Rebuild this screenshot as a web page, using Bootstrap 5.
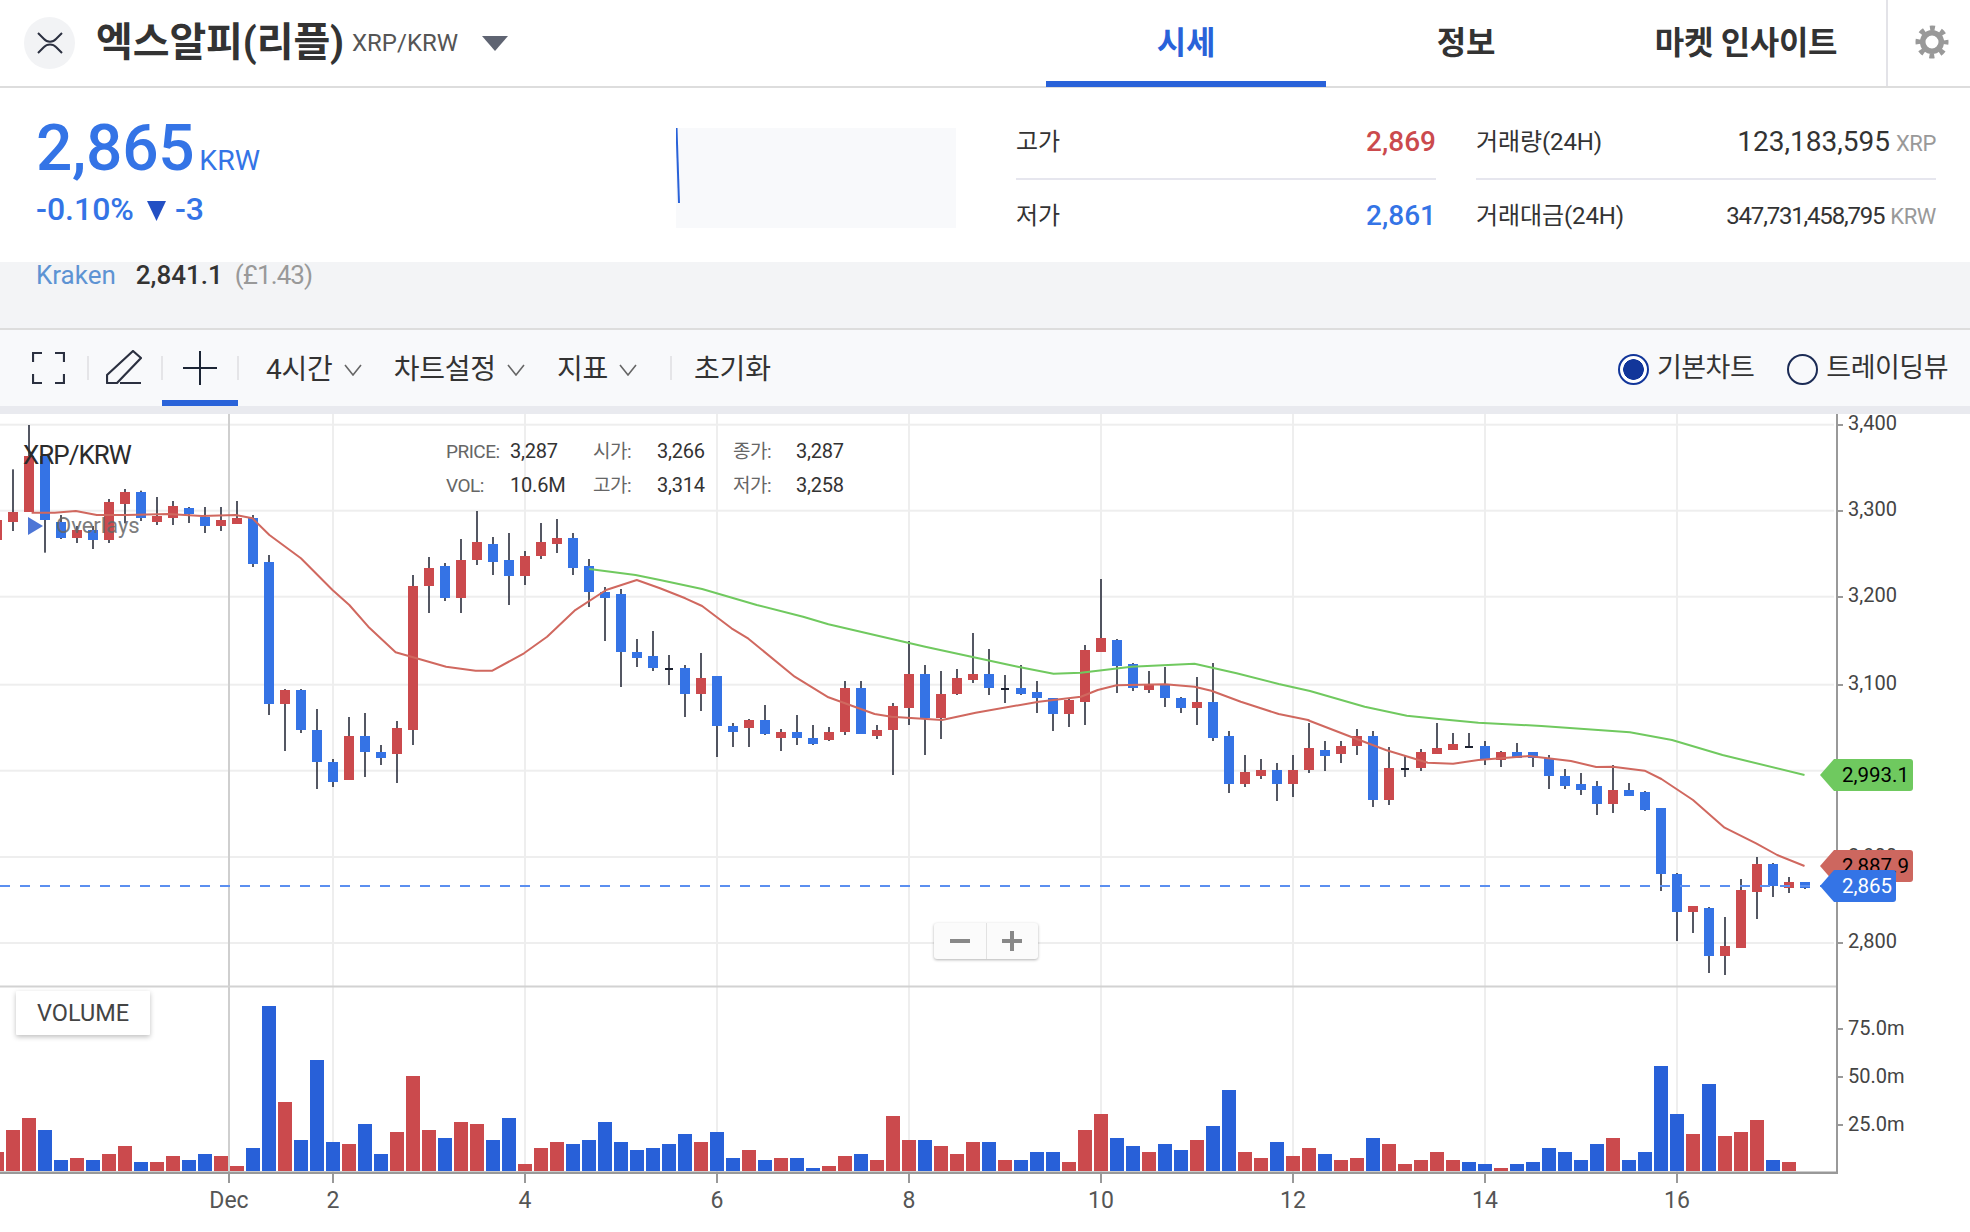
<!DOCTYPE html>
<html lang="ko">
<head>
<meta charset="UTF-8">
<meta name="viewport" content="width=device-width, initial-scale=1.0">
<title>XRP/KRW</title>
<link href="https://cdn.jsdelivr.net/npm/bootstrap@5.3.0/dist/css/bootstrap.min.css" rel="stylesheet">
<style>
    html, body { margin: 0; width: 1970px; height: 1232px; overflow: hidden; }
    body { font-family: Roboto, "Noto Sans CJK KR", sans-serif; color: #333; background: #fff; }

    /* top bar */
    .top-bar { height: 88px; border-bottom: 2px solid #ddd; }
    .close-btn { width: 51px; height: 52px; margin: 0 21px 0 24px; padding: 0; border: 0; border-radius: 50%; background: #f2f3f5; }
    .coin-name { font-size: 40px; font-weight: 700; letter-spacing: -.1px; color: #333; }
    .coin-pair { font-size: 24px; color: #555; margin-left: 8px; }
    .coin-caret { margin-left: 24px; }
    .tabs { margin-left: auto; margin-right: 0; height: 88px; }
    .tabs .nav-link { width: 280px; height: 88px; padding: 20px 0 0; text-align: center; font-size: 32px; font-weight: 700; color: #333; letter-spacing: -.3px; border-bottom: 6px solid transparent; }
    .tabs .nav-link.active { color: #2962d9; border-bottom-color: #2962d9; }
    .gear-cell { width: 84px; height: 86px; padding: 0 0 2px 27px; border-left: 2px solid #e3e3e8; }

    /* price panel */
    .price-panel { height: 174px; }
    .price-left { width: 676px; padding: 23px 0 0 36px; color: #3474e6; }
    .price-now { font-size: 64px; font-weight: 500; line-height: 76px; letter-spacing: -.3px; }
    .price-unit { font-size: 28.500px; margin-left: 5px; letter-spacing: 0; }
    .price-change { font-size: 32px; font-weight: 500; line-height: 40px; margin-top: -10px; }
    .price-arrow { margin: 0 9px 0 13px; vertical-align: -1px; }
    .spark { width: 280px; height: 100px; margin-top: 40px; background: #f8f9fb; }
    .stat-col { margin-left: 60px; width: 420px; }
    .stat-col + .stat-col { margin-left: 40px; width: 460px; }
    .stat-row { height: 92px; padding-top: 17px; border-bottom: 2px solid #e6e6ee; }
    .stat-row + .stat-row { height: 71px; padding-top: 1px; border-bottom: 0; }
    .stat-label { font-size: 24px; letter-spacing: -.1px; color: #333; }
    .stat-value { font-size: 28px; font-weight: 500; }
    .stat-num { font-size: 28px; }
    .stat-num-sm { font-size: 24px; letter-spacing: -1.2px; }
    .stat-unit { font-size: 22px; color: #999; margin-left: 6px; letter-spacing: -.4px; }
    .text-up { color: #cb4a4d; }
    .text-down { color: #3474e6; }

    /* exchange band */
    .band { height: 68px; background: #f3f4f6; border-bottom: 2px solid #ddd; padding-left: 36px; font-size: 26px; line-height: 26px; }
    .band-name { color: #5d93d3; margin-right: 20px; }
    .band-price { font-weight: 500; color: #333; margin-right: 12px; }
    .band-fiat { color: #999; letter-spacing: -.9px; }

    /* chart toolbar */
    .toolbar { height: 84px; background: #f8f9fb; border-bottom: 8px solid #e9eaef; color: #333; }
    .full-icon { margin: 0 22px 0 32px; }
    .pencil-cell { width: 72px; padding-left: 17px; }
    .tool { width: 76px; height: 76px; margin: 0 -1px; }
    .tool.active { border-bottom: 6px solid #2962d9; padding-top: 6px; }
    .sep { width: 2px; height: 24px; background: #e5e5e8; flex: none; }
    .sep-reset { margin: 0 22px 0 33px; }
    .tool-menu { font-size: 28px; padding: 3px 0 0; border: 0; color: #333; letter-spacing: -.2px; margin-left: 32px; }
    .tool-menu.first { margin-left: 27px; }
    .tool-menu.plain { margin-left: 0; }
    .tool-menu svg { margin-left: 11px; vertical-align: 3px; }
    .view-switch { margin-left: auto; padding-right: 22px; }
    .view-switch .form-check-input { width: 31px; height: 31px; margin: 2px 8px 0 0; float: none; background-color: transparent; border: 2px solid #1b2b55; }
    .view-switch .form-check-input:checked { border-color: #12369a; background-color: #fff; background-image: radial-gradient(circle, #12369a 0 10px, transparent 10.6px); }
    .view-switch .form-check-label { font-size: 27px; letter-spacing: -.5px; color: #333; }
    .view-switch .form-check { padding: 0; margin: 0 0 0 33px; min-height: 0; }

    /* chart */
    .chart-wrap { position: relative; width: 1970px; height: 818px; }
    .chart-wrap svg { display: block; }
    .chart-title { position: absolute; left: 23px; top: 24px; font-size: 26px; line-height: 34px; letter-spacing: -1px; color: #2b2b2b; }
    .overlays { position: absolute; left: 28px; top: 100px; font-size: 22px; line-height: 24px; color: #666; opacity: .85; }
    .overlays span { margin-left: 13px; }
    .legend-box { position: absolute; left: 446px; top: 24px; display: grid; grid-template-columns: 64px 83px 64px 76px 63px 60px; row-gap: 7px; font-size: 20px; line-height: 27px; color: #333; letter-spacing: -.2px; }
    .legend-box .lbl { color: #666; font-size: 19px; letter-spacing: -.5px; }
    .volume-tag { position: absolute; left: 16px; top: 577px; width: 134px; height: 44px; border: 0; padding: 1px 0 0; border-radius: 1px; background: #fff; box-shadow: 0 2px 5px rgba(0,0,0,.25); font-size: 23.5px; color: #444; }
    .zoom-box { position: absolute; left: 934px; top: 509px; width: 104px; height: 36px; background: #fbfbfb; border-radius: 3px; box-shadow: 0 1px 3px rgba(0,0,0,.3); }
    .zoom-box .btn { flex: 1; padding: 0; border: 0; border-radius: 0; line-height: 0; }
    .zoom-box .btn + .btn { border-left: 1px solid #e2e2e2; }
</style>
</head>
<body>

<div class="top-bar d-flex align-items-center">
    <button class="close-btn d-flex align-items-center justify-content-center" type="button">
        <svg width="26" height="22" viewBox="0 0 26 22"><path d="M1 1L7 7C10 10.500 16 10.500 19 7L25 1M1 21L7 15C10 11.500 16 11.500 19 15L25 21" fill="none" stroke="#2b3040" stroke-width="2"/></svg>
    </button>
    <span class="coin-name">엑스알피(리플)</span>
    <span class="coin-pair">XRP/KRW</span>
    <svg class="coin-caret" width="26" height="15" viewBox="0 0 26 15"><path d="M0 0H26L13 15Z" fill="#5f6472"/></svg>
    <ul class="nav tabs">
        <li class="nav-item"><a class="nav-link active" href="#">시세</a></li>
        <li class="nav-item"><a class="nav-link" href="#">정보</a></li>
        <li class="nav-item"><a class="nav-link" href="#">마켓 인사이트</a></li>
    </ul>
    <div class="gear-cell d-flex align-items-center">
        <svg width="34" height="34" viewBox="0 0 34 34">
            <circle cx="17" cy="17" r="14" fill="none" stroke="#999" stroke-width="5" stroke-dasharray="5 5.996" stroke-dashoffset="2.5"/>
            <circle cx="17" cy="17" r="9.300" fill="none" stroke="#999" stroke-width="5.600"/>
        </svg>
    </div>
</div>

<div class="price-panel d-flex">
    <div class="price-left">
        <div class="price-now">2,865<span class="price-unit fw-normal">KRW</span></div>
        <div class="price-change">-0.10%<svg class="price-arrow" width="19" height="20" viewBox="0 0 19 20"><path d="M0 0H19L9.500 20Z" fill="#2350c4"/></svg>-3</div>
    </div>
    <div class="spark">
        <svg width="280" height="100" class="d-block"><path d="M0.5 0L3 75" stroke="#2962d9" stroke-width="2" fill="none"/></svg>
    </div>
    <div class="stat-col">
        <div class="stat-row d-flex justify-content-between align-items-center"><span class="stat-label">고가</span><span class="stat-value text-up">2,869</span></div>
        <div class="stat-row d-flex justify-content-between align-items-center"><span class="stat-label">저가</span><span class="stat-value text-down">2,861</span></div>
    </div>
    <div class="stat-col">
        <div class="stat-row d-flex justify-content-between align-items-center"><span class="stat-label">거래량(24H)</span><span><span class="stat-num">123,183,595</span><span class="stat-unit">XRP</span></span></div>
        <div class="stat-row d-flex justify-content-between align-items-center"><span class="stat-label">거래대금(24H)</span><span><span class="stat-num-sm">347,731,458,795</span><span class="stat-unit">KRW</span></span></div>
    </div>
</div>

<div class="band">
    <span class="band-name">Kraken</span><span class="band-price">2,841.1</span><span class="band-fiat">(£1.43)</span>
</div>

<div class="toolbar d-flex align-items-center">
    <svg class="full-icon" width="33" height="32" viewBox="0 0 33 32"><path d="M1 10V1H10M23 1H32V10M1 22V31H10M23 31H32V22" fill="none" stroke="#2b3040" stroke-width="2.200"/></svg>
    <div class="sep"></div>
    <div class="pencil-cell">
        <svg class="d-block" width="36" height="36" viewBox="0 0 36 36"><path d="M1 25L27 1L35 8L11 33H1ZM14 33H35" fill="none" stroke="#2b3040" stroke-width="2.200" stroke-linejoin="round"/></svg>
    </div>
    <div class="sep"></div>
    <div class="tool active d-flex align-items-center justify-content-center">
        <svg width="36" height="36" viewBox="0 0 36 36"><path d="M18 1V35M1 18H35" stroke="#1c2535" stroke-width="2"/></svg>
    </div>
    <div class="sep"></div>
    <button class="btn tool-menu first" type="button">4시간<svg width="18" height="12" viewBox="0 0 18 12"><path d="M1 1L9 11L17 1" fill="none" stroke="#666" stroke-width="1.600"/></svg></button>
    <button class="btn tool-menu" type="button">차트설정<svg width="18" height="12" viewBox="0 0 18 12"><path d="M1 1L9 11L17 1" fill="none" stroke="#666" stroke-width="1.600"/></svg></button>
    <button class="btn tool-menu" type="button">지표<svg width="18" height="12" viewBox="0 0 18 12"><path d="M1 1L9 11L17 1" fill="none" stroke="#666" stroke-width="1.600"/></svg></button>
    <div class="sep sep-reset"></div>
    <button class="btn tool-menu plain" type="button">초기화</button>
    <div class="view-switch d-flex align-items-center">
        <div class="form-check d-flex align-items-center">
            <input class="form-check-input" type="radio" name="chartView" id="viewBasic" checked>
            <label class="form-check-label" for="viewBasic">기본차트</label>
        </div>
        <div class="form-check d-flex align-items-center">
            <input class="form-check-input" type="radio" name="chartView" id="viewTrading">
            <label class="form-check-label" for="viewTrading">트레이딩뷰</label>
        </div>
    </div>
</div>

<div class="chart-wrap">
    <svg id="chart" width="1970" height="818" viewBox="0 414 1970 818" font-family="Roboto, sans-serif"></svg>
    <div class="chart-title">XRP/KRW</div>
    <div class="overlays d-flex align-items-center">
        <svg width="15" height="18" viewBox="0 0 15 18"><path d="M0 0L15 9L0 18Z" fill="#2f5fd0"/></svg><span>Overlays</span>
    </div>
    <div class="legend-box">
        <span class="lbl">PRICE:</span><span>3,287</span><span class="lbl">시가:</span><span>3,266</span><span class="lbl">종가:</span><span>3,287</span>
        <span class="lbl">VOL:</span><span>10.6M</span><span class="lbl">고가:</span><span>3,314</span><span class="lbl">저가:</span><span>3,258</span>
    </div>
    <button class="volume-tag" type="button">VOLUME</button>
    <div class="zoom-box d-flex">
        <button class="btn d-flex align-items-center justify-content-center" type="button"><svg width="20" height="4"><rect width="20" height="4" fill="#888"/></svg></button>
        <button class="btn d-flex align-items-center justify-content-center" type="button"><svg width="20" height="20"><path d="M8 0H12V8H20V12H12V20H8V12H0V8H8Z" fill="#888"/></svg></button>
    </div>
</div>

<script>
    const CANDLE_BLUE = '#3573e5', BAR_BLUE = '#2860d8', RED = '#cb4a4d', WICK = '#1c2130';

    // rows are read off 3x crops: [type, bodyTop, bodyBottom, wickTop, wickBottom], y = y0 + v / 3
    const candleChunks = [
        { y0: 420, first: -1, rows: [
            ['r',300,360,300,360],['r',276,306,148,333],['r',108,276,15,276],['b',108,300,108,398],['b',306,354,285,357],
            ['r',330,354,318,369],['b',330,360,318,387],['r',246,360,237,369],['r',216,252,207,310],['b',216,294,212,303],
            ['r',288,306,231,315],['r',258,294,243,315],['b',264,282,261,309],['b',291,318,261,339],['r',300,318,261,333],
            ['r',294,312,243,312],['b',294,432,285,441],['b',426,852,405,885],['r',810,852,807,993],['b',810,930,807,939],
            ['b',930,1026,867,1107],['b',1026,1086,1017,1101],['r',948,1080,891,1080],['b',948,996,879,1071],['b',996,1014,975,1035],
            ['r',924,1002,903,1089],['r',498,930,465,975],['r',444,498,411,579],['b',438,534,429,543],['r',420,534,357,579],
            ['r',366,420,273,435],['b',372,426,351,465],['b',420,468,339,555],['r',408,468,393,495],['r',366,408,309,417],
            ['r',354,372,297,399],['b',354,444,339,465],['b',438,516,417,561],['b',516,534,501,663],['b',522,696,507,801],
            ['b',696,714,657,741],['b',708,744,633,753]
        ]},
        { y0: 540, first: 41, rows: [
            ['d',387,387,345,435],['b',384,462,375,531],['r',414,462,339,513],['b',408,558,408,651],['b',558,576,549,621],
            ['r',540,564,537,621],['b',540,582,495,585],['r',576,594,567,633],['b',576,594,525,615],['b',594,612,555,615],
            ['r',576,600,561,603],['r',444,576,423,585],['b',444,582,423,582],['r',570,588,555,597],['r',498,570,489,705],
            ['r',402,504,303,555],['b',402,534,375,645],['r',462,534,393,597],['r',414,462,387,465],['r',402,420,279,429],
            ['b',402,444,327,465],['d',447,447,405,489],['b',444,462,375,465],['b',456,474,423,519],['b',474,522,474,573],
            ['r',480,522,477,561],['r',330,486,315,555],['r',294,336,117,336],['b',300,378,297,459],['b',372,444,369,453],
            ['r',432,450,393,459],['b',432,474,381,501],['b',474,504,471,519],['r',486,504,411,555],['b',486,594,369,603],
            ['b',588,732,573,759],['r',696,732,645,741],['r',690,708,657,717],['b',690,732,669,783],['r',690,732,645,771],
            ['r',624,690,549,699]
        ]},
        { y0: 660, first: 82, rows: [
            ['b',270,288,243,333],['r',258,282,243,309],['r',228,258,207,285],['b',228,420,213,441],['r',324,420,261,435],
            ['d',327,327,285,351],['r',276,324,267,333],['r',264,282,189,282],['r',252,270,219,270],['d',261,261,219,264],
            ['b',258,300,243,315],['r',276,300,273,321],['b',276,294,249,294],['b',276,294,276,321],['b',294,348,285,387],
            ['b',348,378,327,387],['b',372,390,339,405],['b',378,432,363,465],['r',390,432,315,459],['b',390,408,369,408],
            ['b',396,450,393,453],['b',444,642,444,693],['b',642,756,639,843],['r',738,756,738,819],['b',744,888,741,939],
            ['r',858,888,771,945],['r',690,864,657,864],['r',612,696,591,777],['b',612,678,609,711],['r',666,684,651,699],
            ['b',666,684,666,687]
        ]}
    ];

    // volume bars from index -1 on, [colour, top], y = 980 + top / 3
    const volumes = 'r516 r450 r414 b450 b540 r534 b540 r522 r498 b546 r546 r528 b540 b522 r528 r558 b504 b78 r366 b480 b240 b486 r492 b432 b522 r456 r288 r450 b474 r426 r432 b480 b414 r552 r504 r486 b492 b480 b426 b486 b510 b504 b492 b462 r486 b456 b534 r510 b540 r534 b534 b564 r558 r528 b522 r540 r408 r480 b480 r498 r522 r486 b486 r540 b540 b516 b516 r546 r450 r402 b474 b498 r516 b492 b510 r480 b438 b330 r516 r534 b486 r528 r504 b522 r540 r534 b474 r492 r552 r540 r516 r540 b546 b552 r564 b552 b546 b504 b516 b540 b492 r474 b540 b516 b258 b402 r462 b312 r468 r456 r420 b540 r546'.split(' ');

    const pts = (x0, y0, arr) => arr.map(p => (x0 + p[0] / 2.376).toFixed(1) + ',' + (y0 + p[1] / 3).toFixed(1));
    const redLine = [
        ...pts(0, 420, [[75,278],[130,278],[180,273],[230,285],[300,285],[400,282],[480,288],[560,285],[600,295],[640,345],[715,415],[790,510],[830,555],[875,620],[940,697],[1060,740],[1130,752],[1170,752],[1245,700],[1300,650],[1365,572],[1440,510],[1513,480]]),
        ...pts(660, 540, [[0,145],[60,175],[100,198],[170,265],[210,296],[320,410],[400,472],[510,522],[550,530],[670,540],[750,518],[900,485],[1000,470],[1040,450],[1085,436],[1200,433],[1270,440],[1310,452],[1380,485],[1470,522],[1540,540]]),
        ...pts(1310, 660, [[0,183],[100,232],[180,270],[280,308],[340,311],[400,300],[520,288],[620,303],[680,321],[720,320],[795,332],[835,357],[910,420],[985,503],[1060,550],[1110,585],[1175,618]])
    ];
    const greenLine = [
        ...pts(0, 420, [[1400,447],[1510,465]]),
        ...pts(660, 540, [[0,120],[100,147],[230,195],[340,230],[400,253],[520,288],[630,320],[740,350],[850,380],[935,401],[1000,398],[1120,380],[1270,371],[1370,400],[1470,432]]),
        ...pts(1310, 660, [[0,93],[130,140],[230,167],[300,176],[400,188],[550,198],[760,217],[860,240],[980,285],[1175,345]])
    ];

    let s = '';
    const rect = (x, y, w, h, c) => `<rect x="${x}" y="${y}" width="${w}" height="${h}" fill="${c}"/>`;
    const text = (x, y, t, size, fill, anchor) => `<text x="${x}" y="${y}" font-size="${size}" fill="${fill}" text-anchor="${anchor || 'start'}" dominant-baseline="central">${t}</text>`;

    // grid
    [424.7, 510.7, 596.7, 684.7, 770.7, 857, 943].forEach(y => { s += rect(0, y - 1, 1834, 2, '#eeeeee'); });
    [333, 525, 717, 909, 1101, 1293, 1485, 1677].forEach(x => { s += rect(x - 1, 414, 2, 758, '#eeeeee'); });
    s += rect(228, 414, 2, 758, '#cfcfcf');

    // pane separator and axes
    s += rect(0, 985.5, 1837, 2, '#d2d2d2');
    s += rect(0, 1171.5, 1838, 2.5, '#999');
    s += rect(1836, 414, 2, 760, '#999');

    // candles
    candleChunks.forEach(chunk => {
        chunk.rows.forEach((r, n) => {
            const x = 13 + 16 * (chunk.first + n), y = v => chunk.y0 + v / 3;
            s += rect(x - 0.75, y(r[3]), 1.5, (r[4] - r[3]) / 3, WICK);
            if (r[0] === 'd') s += rect(x - 4, y(r[1]) - 1, 8, 2, WICK);
            else s += rect(x - 5, y(r[1]), 10, (r[2] - r[1]) / 3, r[0] === 'b' ? CANDLE_BLUE : RED);
        });
    });

    // moving averages and the last price line
    s += `<polyline points="${redLine.join(' ')}" fill="none" stroke="#d0685f" stroke-width="2" stroke-linejoin="round"/>`;
    s += `<polyline points="${greenLine.join(' ')}" fill="none" stroke="#70c95f" stroke-width="2" stroke-linejoin="round"/>`;
    s += `<line x1="0" y1="886" x2="1822" y2="886" stroke="#5b8ff0" stroke-width="2" stroke-dasharray="10 10"/>`;

    // volume
    volumes.forEach((v, n) => {
        const top = 980 + parseInt(v.slice(1), 10) / 3;
        s += rect(13 + 16 * (n - 1) - 7, top, 14, 1171 - top, v[0] === 'b' ? BAR_BLUE : RED);
    });

    // axis labels (3,000 sits behind the green tag)
    [[424,'3,400'],[510,'3,300'],[596,'3,200'],[684,'3,100'],[857,'2,900'],[942,'2,800']].forEach(t => {
        s += rect(1838, t[0], 5, 2, '#999') + text(1848, t[0] - 1, t[1], 20, '#444');
    });
    s += rect(1838, 770, 5, 2, '#999');
    [[1028,'75.0m'],[1076,'50.0m'],[1124,'25.0m']].forEach(t => {
        s += rect(1838, t[0], 5, 2, '#999') + text(1848, t[0], t[1], 20, '#444');
    });
    [[229,'Dec'],[333,'2'],[525,'4'],[717,'6'],[909,'8'],[1101,'10'],[1293,'12'],[1485,'14'],[1677,'16']].forEach(t => {
        s += rect(t[0] - 1, 1173, 2, 10, '#999') + text(t[0], 1200, t[1], 23, '#555', 'middle');
    });

    // price tags
    const tag = (y0, y1, right, fill, label, color) =>
        `<path d="M1820 ${(y0 + y1) / 2}L1834 ${y0}H${right - 3}Q${right} ${y0} ${right} ${y0 + 3}V${y1 - 3}Q${right} ${y1} ${right - 3} ${y1}H1834Z" fill="${fill}"/>` + text(1842, (y0 + y1) / 2, label, 20.5, color);
    s += tag(759, 791, 1913, '#6fc95f', '2,993.1', '#000');
    s += tag(850, 882, 1913, '#cd675f', '2,887.9', '#000');
    s += tag(870, 902, 1896, '#3474e6', '2,865', '#fff');

    document.getElementById('chart').innerHTML = s;
</script>
<script src="https://cdn.jsdelivr.net/npm/bootstrap@5.3.0/dist/js/bootstrap.bundle.min.js"></script>
</body>
</html>
